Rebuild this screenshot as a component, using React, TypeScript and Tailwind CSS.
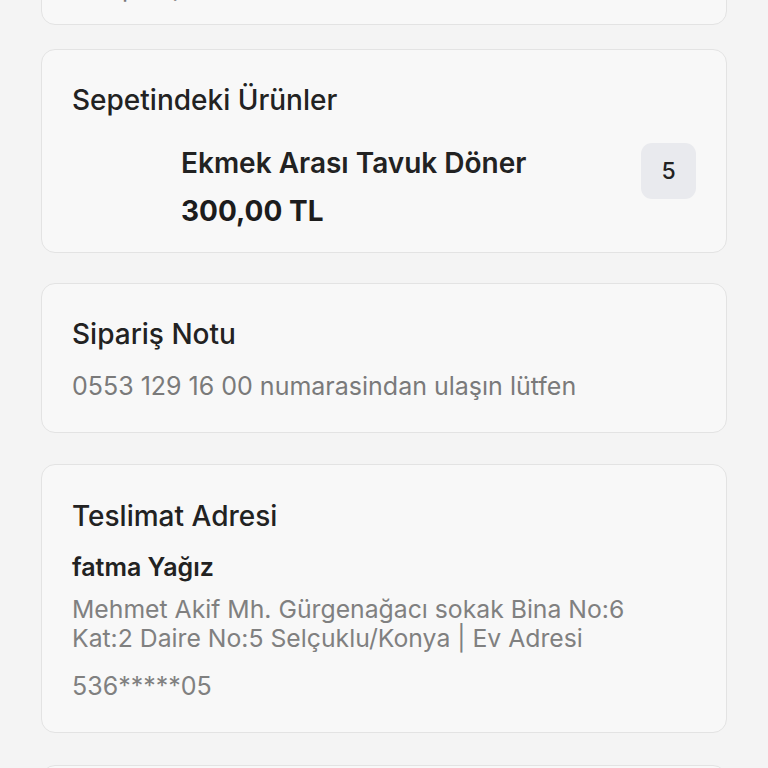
import React from 'react';

const font = { fontFamily: 'Inter, "Noto Sans", sans-serif' };

const Card: React.FC<{ className?: string; children: React.ReactNode }> = ({ className = '', children }) => (
  <div className={`rounded-[14px] border border-[#e3e3e3] bg-[#f8f8f8] px-[30px] ${className}`}>
    {children}
  </div>
);

export default function App() {
  return (
    <div className="h-[768px] overflow-hidden bg-[#f4f4f4]" style={font}>
      <div className="px-[41px] flex flex-col">
        {/* Ödeme kartı (üstte kesik) */}
        <Card className="-mt-[81px] pt-[20px] pb-[20px]">
          <div className="text-[25px] leading-[32px] text-[#777]">Kapıda Ödeme</div>
          <div className="pl-[10px] text-[25px] leading-[32px] text-[#777]">(Kapıda)</div>
        </Card>

        {/* Sepetindeki Ürünler */}
        <Card className="mt-[24px] pt-[33px] pb-[24px]">
          <h2 className="text-[28px] leading-[34px] font-medium text-[#222]">Sepetindeki Ürünler</h2>
          <div className="mt-[29px] flex items-start">
            <div className="w-[109px] shrink-0" />
            <div className="flex-1 flex flex-col gap-[14px]">
              <div className="text-[28px] leading-[34px] font-semibold text-[#222]">Ekmek Arası Tavuk Döner</div>
              <div className="text-[28px] leading-[34px] font-bold text-[#1c1c1c]">300,00 TL</div>
            </div>
            <div className="-mt-[3px] w-[55px] h-[56px] rounded-[11px] bg-[#e9eaee] flex items-center justify-center text-[23px] font-medium text-[#222]">
              5
            </div>
          </div>
        </Card>

        {/* Sipariş Notu */}
        <Card className="mt-[30px] pt-[33px] pb-[30px]">
          <h2 className="text-[28px] leading-[34px] font-medium text-[#222]">Sipariş Notu</h2>
          <p className="mt-[19px] text-[25px] leading-[32px] text-[#7a7a7a]">0553 129 16 00 numarasindan ulaşın lütfen</p>
        </Card>

        {/* Teslimat Adresi */}
        <Card className="mt-[31px] pt-[34px] pb-[30px]">
          <h2 className="text-[28px] leading-[34px] font-medium text-[#222]">Teslimat Adresi</h2>
          <div className="mt-[18px] text-[25px] leading-[32px] font-semibold text-[#222]">fatma Yağız</div>
          <p className="mt-[12px] text-[24.75px] leading-[29px] text-[#808080]">
            Mehmet Akif Mh. Gürgenağacı sokak Bina No:6
            <br />
            Kat:2 Daire No:5 Selçuklu/Konya | Ev Adresi
          </p>
          <div className="mt-[17px] text-[25px] leading-[32px] text-[#808080]">536*****05</div>
        </Card>

        {/* Sonraki kart */}
        <Card className="mt-[32px] h-[120px]">
          <div />
        </Card>
      </div>
    </div>
  );
}
